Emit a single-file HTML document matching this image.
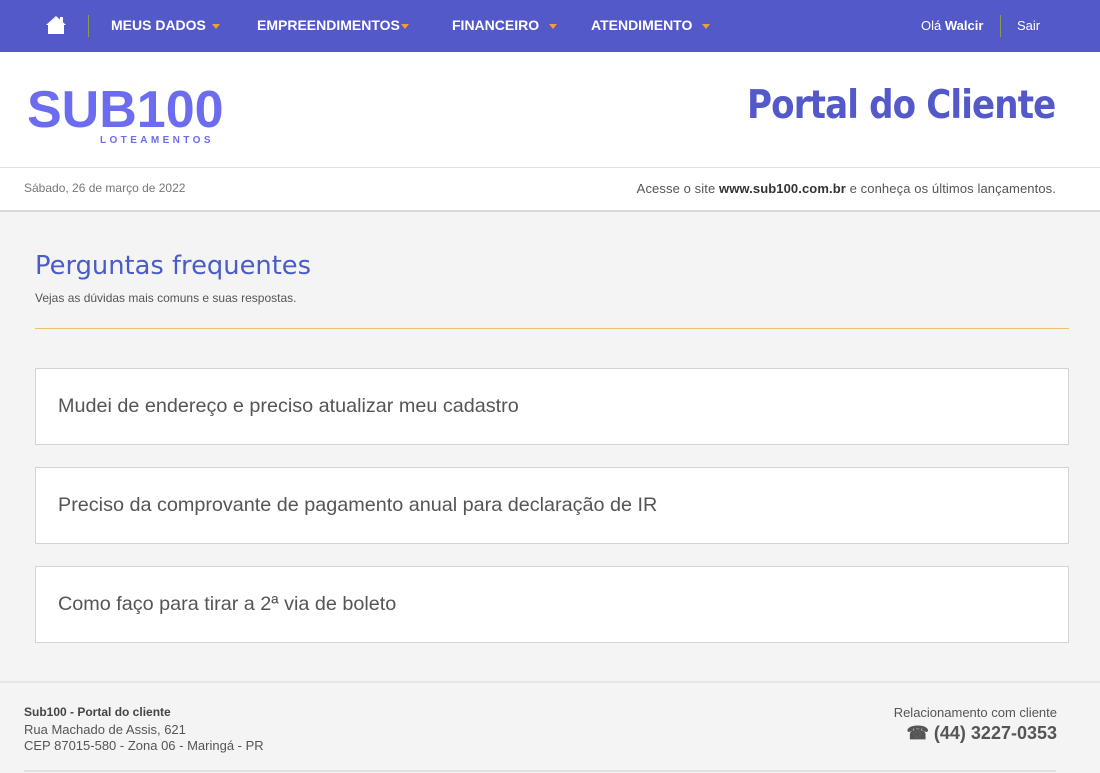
<!DOCTYPE html><html><head><meta charset="utf-8"><style>
*{margin:0;padding:0;box-sizing:border-box}
body{width:1100px;height:773px;overflow:hidden;background:#f4f4f4;font-family:"Liberation Sans",sans-serif;position:relative}
.a{position:absolute;white-space:nowrap}
.nav{position:absolute;left:0;top:0;width:1100px;height:52px;background:#5459c9}
.ni{position:absolute;top:17px;color:#fff;font-weight:bold;font-size:14px}
.car{display:inline-block;width:0;height:0;border-left:4px solid transparent;border-right:4px solid transparent;border-top:5px solid #f0a030;vertical-align:middle;margin-left:6px}
.box{position:absolute;left:35px;width:1034px;height:77px;background:#fff;border:1px solid #d4d4d4;font-size:19.8px;color:#555;padding-left:22px;line-height:75px}
</style></head><body>
<div class="nav">
<svg class="a" style="left:45px;top:15px" width="22" height="20" viewBox="0 0 22 20"><path d="M11 1 L1 10 L3 10 L3 19 L19 19 L19 10 L21 10 Z" fill="#fff"/><rect x="15" y="2" width="3" height="5" fill="#fff"/></svg>
<div class="a" style="left:88px;top:15px;width:1px;height:22px;background:#8a9a50"></div>
<div class="ni" style="left:111px">MEUS DADOS<span class="car"></span></div>
<div class="ni" style="left:257px">EMPREENDIMENTOS<span class="car" style="margin-left:1px"></span></div>
<div class="ni" style="left:452px">FINANCEIRO<span class="car" style="margin-left:10px"></span></div>
<div class="ni" style="left:591px">ATENDIMENTO<span class="car" style="margin-left:10px"></span></div>
<div class="ni" style="left:921px;font-weight:normal;font-size:13px;top:18px">Olá <b>Walcir</b></div>
<div class="a" style="left:1000px;top:15px;width:1px;height:22px;background:#8a9a50"></div>
<div class="ni" style="left:1017px;font-weight:normal;font-size:13px;top:18px">Sair</div>
</div>
<div class="a" style="left:0;top:52px;width:1100px;height:116px;background:#fff;border-bottom:1px solid #e0e0e0"></div>
<div class="a" style="left:0;top:168px;width:1100px;height:44px;background:#fff;border-bottom:2px solid #d8d8d8"></div>
<div class="a" style="left:27px;top:80px;font-size:52px;font-weight:bold;color:#6b6cf0;letter-spacing:0px;transform:scaleX(1);transform-origin:left">SUB100</div>
<div class="a" style="left:100px;top:135px;font-size:10px;font-weight:bold;color:#6b6cf0;letter-spacing:3.4px">LOTEAMENTOS</div>
<div class="a" style="left:747px;top:83px;font-size:39px;font-weight:bold;color:#5459c9;font-family:'DejaVu Sans',sans-serif;letter-spacing:-1px;transform:scaleX(0.875);transform-origin:left">Portal do Cliente</div>
<div class="a" style="left:24px;top:181px;font-size:12px;color:#777">Sábado, 26 de março de 2022</div>
<div class="a" style="right:44px;top:181px;font-size:13px;color:#555;letter-spacing:0.1px">Acesse o site <b style="color:#333">www.sub100.com.br</b> e conheça os últimos lançamentos.</div>
<div class="a" style="left:35px;top:251px;font-size:26px;color:#4a5cc9;font-family:'DejaVu Sans',sans-serif;transform:scaleX(0.99);transform-origin:left">Perguntas frequentes</div>
<div class="a" style="left:35px;top:291px;font-size:12px;color:#555">Vejas as dúvidas mais comuns e suas respostas.</div>
<div class="a" style="left:35px;top:328px;width:1034px;height:1px;background:#f0c070"></div>
<div class="box" style="top:368px">Mudei de endereço e preciso atualizar meu cadastro</div>
<div class="box" style="top:467px">Preciso da comprovante de pagamento anual para declaração de IR</div>
<div class="box" style="top:566px">Como faço para tirar a 2ª via de boleto</div>
<div class="a" style="left:0;top:681px;width:1100px;height:2px;background:#e6e6e6"></div>
<div class="a" style="left:24px;top:705px;font-size:12px;color:#444;font-weight:bold">Sub100 - Portal do cliente</div>
<div class="a" style="left:24px;top:722px;font-size:13px;color:#555">Rua Machado de Assis, 621</div>
<div class="a" style="left:24px;top:738px;font-size:13px;color:#555">CEP 87015-580 - Zona 06 - Maringá - PR</div>
<div class="a" style="right:43px;top:705px;font-size:13px;color:#555">Relacionamento com cliente</div>
<div class="a" style="right:43px;top:723px;font-size:18px;color:#555;font-weight:bold">☎ (44) 3227-0353</div>
<div class="a" style="left:24px;top:770px;width:1032px;height:2px;background:#e0e0e0"></div>
</body></html>
